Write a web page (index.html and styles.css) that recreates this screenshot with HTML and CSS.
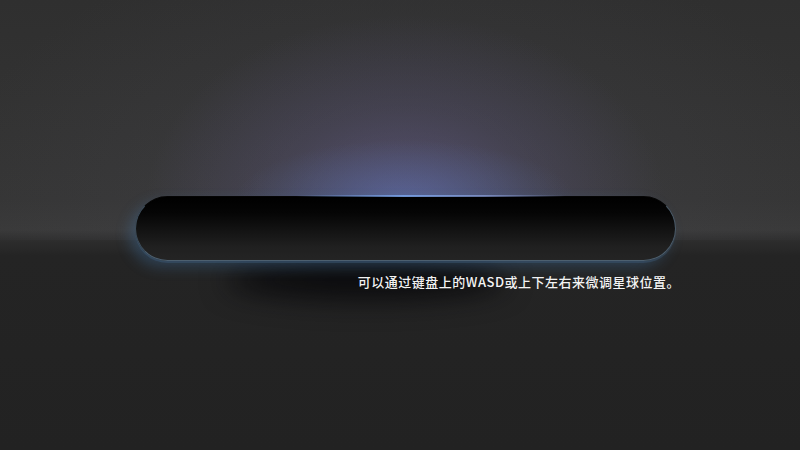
FILE: index.html
```html
<!DOCTYPE html>
<html lang="zh">
<head>
<meta charset="utf-8">
<title>星球位置</title>
<link rel="stylesheet" href="styles.css">
</head>
<body>
<div class="stage">
  <div class="panel">
    <div class="bar"></div>
    <p class="hint">可以通过键盘上的WASD或上下左右来微调星球位置。</p>
  </div>
</div>
</body>
</html>
```
FILE: styles.css
```css
html, body {
  margin: 0;
  padding: 0;
  width: 800px;
  height: 450px;
  overflow: hidden;
}
body {
  background:
    radial-gradient(ellipse 170px 60px at 405px 200px, rgba(90, 130, 210, 0.35), rgba(90, 130, 210, 0) 100%) 0 0 / 800px 240px no-repeat,
    radial-gradient(ellipse 260px 190px at 405px 205px, rgba(110, 100, 160, 0.55), rgba(110, 100, 160, 0.22) 50%, rgba(110, 100, 160, 0) 100%) 0 0 / 800px 240px no-repeat,
    radial-gradient(ellipse 460px 280px at 400px 210px, rgba(80, 80, 90, 0.3), rgba(80, 80, 90, 0) 100%) 0 0 / 800px 240px no-repeat,
    linear-gradient(to bottom, #2f2f2f 0px, #353535 200px, #393939 230px, #2c2c2c 242px, #242424 256px, #222222 450px);
  font-family: "Noto Sans CJK SC", "Noto Sans", sans-serif;
}
.stage {
  display: flex;
  padding-top: 196px;
  padding-left: 135px;
}
.panel {
  display: flex;
  flex-direction: column;
  align-items: flex-end;
  width: 541px;
}
.bar {
  position: relative;
  width: 541px;
  height: 65px;
  box-sizing: border-box;
  border-radius: 33px;
  background: linear-gradient(to bottom, #000000 0%, #050505 25%, #141414 55%, #202020 80%, #242424 100%);
  border: 1.5px solid #050505;
  border-bottom-color: #4d6070;
  border-left-color: #3c4c5a;
  border-right-color: #4a5a68;
  box-shadow:
    -6px 6px 14px rgba(70, 130, 190, 0.3),
    0 2px 0 rgba(60, 80, 100, 0.45);
}
.bar::before {
  content: "";
  position: absolute;
  left: 160px;
  right: 110px;
  top: -2px;
  height: 2px;
  background: linear-gradient(to right, rgba(100, 140, 220, 0), rgba(120, 160, 230, 0.9) 40%, rgba(140, 160, 220, 0.7) 70%, rgba(100, 140, 220, 0));
}
.bar::after {
  content: "";
  position: absolute;
  left: 90px;
  width: 280px;
  top: 64px;
  height: 38px;
  border-radius: 50%;
  background: rgba(6, 6, 8, 0.85);
  filter: blur(14px);
  z-index: -1;
}
.hint {
  margin: 12px -4px 0 0;
  font-size: 13px;
  font-weight: 500;
  line-height: 18px;
  color: #f4f4f4;
  letter-spacing: 0.5px;
}
```
